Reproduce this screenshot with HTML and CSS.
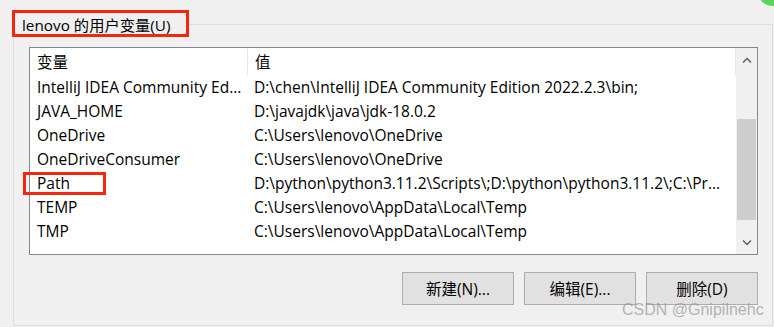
FILE: index.html
```html
<!DOCTYPE html>
<html lang="zh-CN">
<head>
  <meta charset="UTF-8">
  <title>用户变量</title>
  <link rel="stylesheet" href="styles.css">
</head>
<body>
  <div class="corner-blob"></div>

  <div class="group">
    <div class="legend">lenovo 的用户变量(U)</div>

    <div class="listbox">
      <div class="table">
        <div class="row head">
          <div class="cell name">变量</div>
          <div class="cell value">值</div>
        </div>
        <div class="row">
          <div class="cell name">IntelliJ IDEA Community Ed...</div>
          <div class="cell value">D:\chen\IntelliJ IDEA Community Edition 2022.2.3\bin;</div>
        </div>
        <div class="row">
          <div class="cell name">JAVA_HOME</div>
          <div class="cell value">D:\javajdk\java\jdk-18.0.2</div>
        </div>
        <div class="row">
          <div class="cell name">OneDrive</div>
          <div class="cell value">C:\Users\lenovo\OneDrive</div>
        </div>
        <div class="row">
          <div class="cell name">OneDriveConsumer</div>
          <div class="cell value">C:\Users\lenovo\OneDrive</div>
        </div>
        <div class="row">
          <div class="cell name"><span class="mark">Path</span></div>
          <div class="cell value">D:\python\python3.11.2\Scripts\;D:\python\python3.11.2\;C:\Pr...</div>
        </div>
        <div class="row">
          <div class="cell name">TEMP</div>
          <div class="cell value">C:\Users\lenovo\AppData\Local\Temp</div>
        </div>
        <div class="row">
          <div class="cell name">TMP</div>
          <div class="cell value">C:\Users\lenovo\AppData\Local\Temp</div>
        </div>
      </div>

      <div class="scrollbar">
        <div class="arrow">
          <svg width="10" height="6" viewBox="0 0 10 6"><path d="M1 5.5 L5 1.5 L9 5.5" fill="none" stroke="#606060" stroke-width="1.5"/></svg>
        </div>
        <div class="track">
          <div class="thumb"></div>
        </div>
        <div class="arrow">
          <svg width="10" height="6" viewBox="0 0 10 6"><path d="M1 0.5 L5 4.5 L9 0.5" fill="none" stroke="#606060" stroke-width="1.5"/></svg>
        </div>
      </div>
    </div>

    <div class="buttons">
      <button>新建(N)...</button>
      <button>编辑(E)...</button>
      <button>删除(D)</button>
    </div>

    <div class="watermark">CSDN @Gnipilnehc</div>
  </div>
</body>
</html>
```

FILE: styles.css
```css
body {
  margin: 0;
  background-color: #f0f0f0;
  color: #000;
  font-family: 'Open Sans', 'Noto Sans CJK SC', sans-serif;
  font-size: 15.5px;
  overflow: hidden;
}
.corner-blob {
  position: absolute;
  top: -22px;
  left: 758px;
  width: 30px;
  height: 28px;
  border-radius: 50%;
  background-color: #5fd35f;
}
.group {
  position: relative;
  margin: 24px 0 0 13px;
  width: 758px;
  height: 300px;
  border: 1px solid #dcdcdc;
}
.legend {
  width: fit-content;
  height: 21px;
  margin: -15px 0 0 -2px;
  padding: 0 15px 0 7px;
  display: flex;
  align-items: center;
  border: 3px solid #f5260f;
  background-color: #f0f0f0;
  font-size: 15.3px;
}
.listbox {
  display: flex;
  margin: 10px 0 0 15px;
  width: 727px;
  height: 206px;
  border: 1px solid #828790;
  background-color: #fff;
}
.table {
  flex: 1;
  min-width: 0;
}
.row {
  display: flex;
  height: 24px;
  align-items: center;
  white-space: nowrap;
}
.row.head {
  height: 27px;
}
.name {
  width: 210px;
  padding-left: 7px;
}
.value {
  flex: 1;
  padding-left: 7px;
  overflow: hidden;
}
.head .name {
  align-self: stretch;
  display: flex;
  align-items: center;
  border-right: 1px solid #e5e5e5;
}
.head .value {
  align-self: stretch;
  display: flex;
  align-items: center;
  border-right: 1px solid #e5e5e5;
}
.row .mark {
  display: inline-block;
  margin-left: -14px;
  padding: 0 33px 0 11px;
  height: 17px;
  line-height: 17px;
  border: 3px solid #f5260f;
}
.scrollbar {
  width: 21px;
  display: flex;
  flex-direction: column;
  background-color: #f0f0f0;
}
.arrow {
  height: 23px;
  display: flex;
  align-items: center;
  justify-content: center;
}
.track {
  flex: 1;
  padding-top: 48px;
  padding-bottom: 11px;
}
.thumb {
  height: 100%;
  margin: 0 1px 0 1px;
  background-color: #cdcdcd;
}
.buttons {
  display: flex;
  justify-content: flex-end;
  gap: 10px;
  width: 744px;
  margin-top: 17px;
}
button {
  width: 112px;
  height: 33px;
  padding: 0;
  font-family: 'Open Sans', 'Noto Sans CJK SC', sans-serif;
  font-size: 15.5px;
  color: #000;
  background-color: #e1e1e1;
  border: 1px solid #adadad;
}
.watermark {
  position: absolute;
  left: 608px;
  top: 276px;
  font-family: 'Liberation Sans', sans-serif;
  font-size: 16px;
  color: rgba(150, 150, 150, 0.7);
}
```
